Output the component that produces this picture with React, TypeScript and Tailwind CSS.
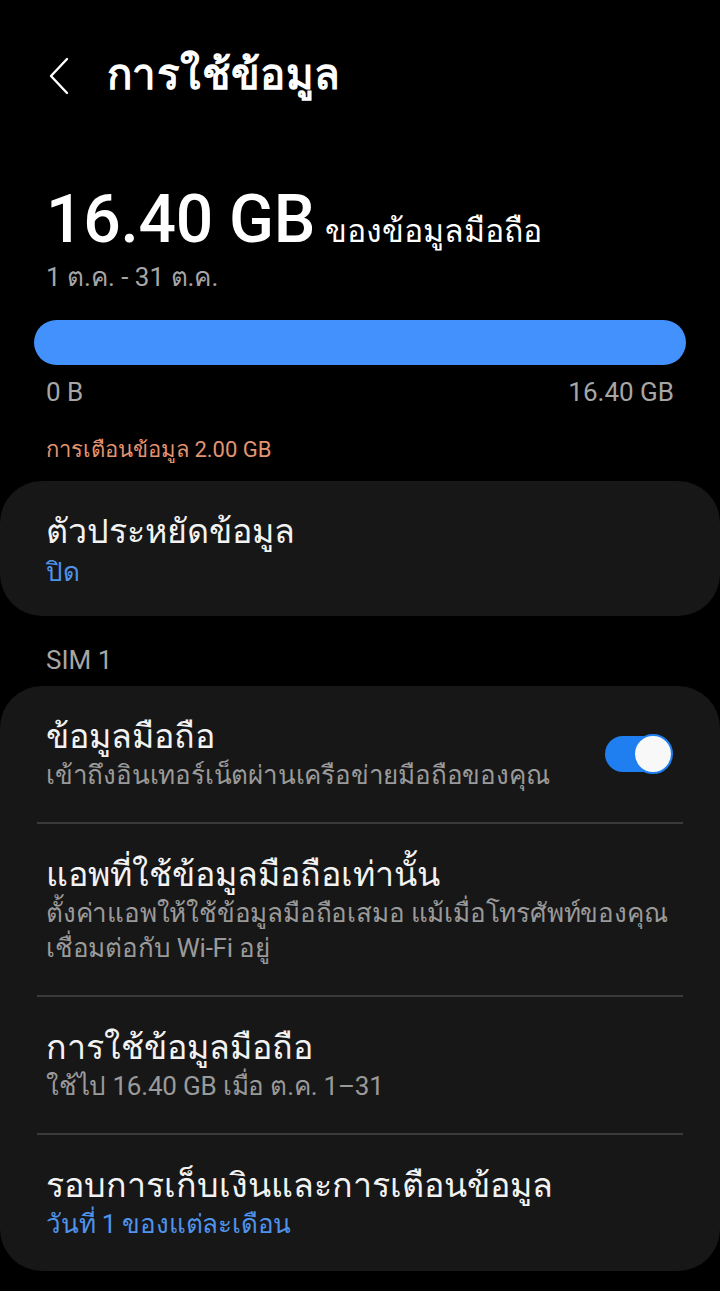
const font = { fontFamily: "Roboto, 'Noto Sans', 'DejaVu Sans', sans-serif" };

interface RowProps {
  title: string;
  sub: React.ReactNode;
  subBlue?: boolean;
  toggle?: boolean;
}

const Row = ({ title, sub, subBlue, toggle }: RowProps) => (
  <div className="flex items-center justify-between py-[29px]">
    <div className="flex flex-col">
      <span className="whitespace-nowrap text-[34px] leading-[43px] text-[#f2f2f2]">{title}</span>
      <span className={`whitespace-nowrap text-[26px] leading-[35px] tracking-[-0.2px] ${subBlue ? "text-[#4f93ea]" : "text-[#9a9a9a]"}`}>{sub}</span>
    </div>
    {toggle && (
      <div className="relative mr-[1px] h-[36px] w-[68px] shrink-0">
        <div className="absolute left-0 top-0 h-[36px] w-[60px] rounded-full bg-[#1f7ff0]" />
        <div className="absolute right-0 top-[-2px] h-[40px] w-[40px] rounded-full border-2 border-[#1f7ff0] bg-[#f8f8f8]" />
      </div>
    )}
  </div>
);

const Divider = () => <div className="h-[2px] bg-[#3a3a3a]" />;

export default function App() {
  return (
    <div className="min-h-[1291px] w-[720px] bg-black text-white" style={font}>
      {/* header */}
      <div className="flex h-[150px] items-start pt-[50px]">
        <svg className="ml-[47px] mt-[7px]" width="24" height="38" viewBox="0 0 24 38" fill="none">
          <path d="M20 2 L4 19 L20 36" stroke="#ffffff" strokeWidth="2.4" strokeLinecap="round" strokeLinejoin="round" />
        </svg>
        <h1 className="ml-[36px] whitespace-nowrap text-[42px] font-bold leading-[50px] tracking-[0.4px]">การใช้ข้อมูล</h1>
      </div>

      {/* usage summary */}
      <div className="px-[46px] pt-[32px]">
        <div className="flex items-baseline gap-[10px]">
          <span className="text-[66px] font-medium leading-[76px] tracking-[-0.3px]">16.40 GB</span>
          <span className="text-[32px]">ของข้อมูลมือถือ</span>
        </div>
        <div className="mt-[1px] text-[26px] leading-[36px] text-[#a6a6a6]">1 ต.ค. - 31 ต.ค.</div>
      </div>

      <div className="px-[34px] pt-[25px]">
        <div className="h-[45px] rounded-full bg-[#4391fc]" />
      </div>

      <div className="flex justify-between px-[46px] pt-[8px] text-[26px] leading-[38px] text-[#a6a6a6]">
        <span>0 B</span>
        <span>16.40 GB</span>
      </div>

      <div className="px-[46px] pt-[22px] text-[22px] leading-[34px] text-[#e39470]">การเตือนข้อมูล 2.00 GB</div>

      {/* data saver */}
      <div className="mt-[14px] rounded-[42px] bg-[#171717] px-[46px] pb-[26px] pt-[28px]">
        <div className="text-[34px] leading-[45px] text-[#f2f2f2]">ตัวประหยัดข้อมูล</div>
        <div className="text-[26px] leading-[36px] text-[#4f93ea]">ปิด</div>
      </div>

      <div className="px-[46px] pt-[27px] text-[26px] leading-[34px] text-[#a6a6a6]">SIM 1</div>

      {/* SIM card */}
      <div className="mt-[9px] rounded-[42px] bg-[#171717] px-[37px]">
        <div className="px-[9px]">
          <Row title="ข้อมูลมือถือ" sub="เข้าถึงอินเทอร์เน็ตผ่านเครือข่ายมือถือของคุณ" toggle />
        </div>
        <Divider />
        <div className="px-[9px]">
          <Row
            title="แอพที่ใช้ข้อมูลมือถือเท่านั้น"
            sub={
              <>
                ตั้งค่าแอพให้ใช้ข้อมูลมือถือเสมอ แม้เมื่อโทรศัพท์ของคุณ
                <br />
                เชื่อมต่อกับ Wi-Fi อยู่
              </>
            }
          />
        </div>
        <Divider />
        <div className="px-[9px]">
          <Row title="การใช้ข้อมูลมือถือ" sub="ใช้ไป 16.40 GB เมื่อ ต.ค. 1–31" />
        </div>
        <Divider />
        <div className="px-[9px]">
          <Row title="รอบการเก็บเงินและการเตือนข้อมูล" sub="วันที่ 1 ของแต่ละเดือน" subBlue />
        </div>
      </div>
    </div>
  );
}
